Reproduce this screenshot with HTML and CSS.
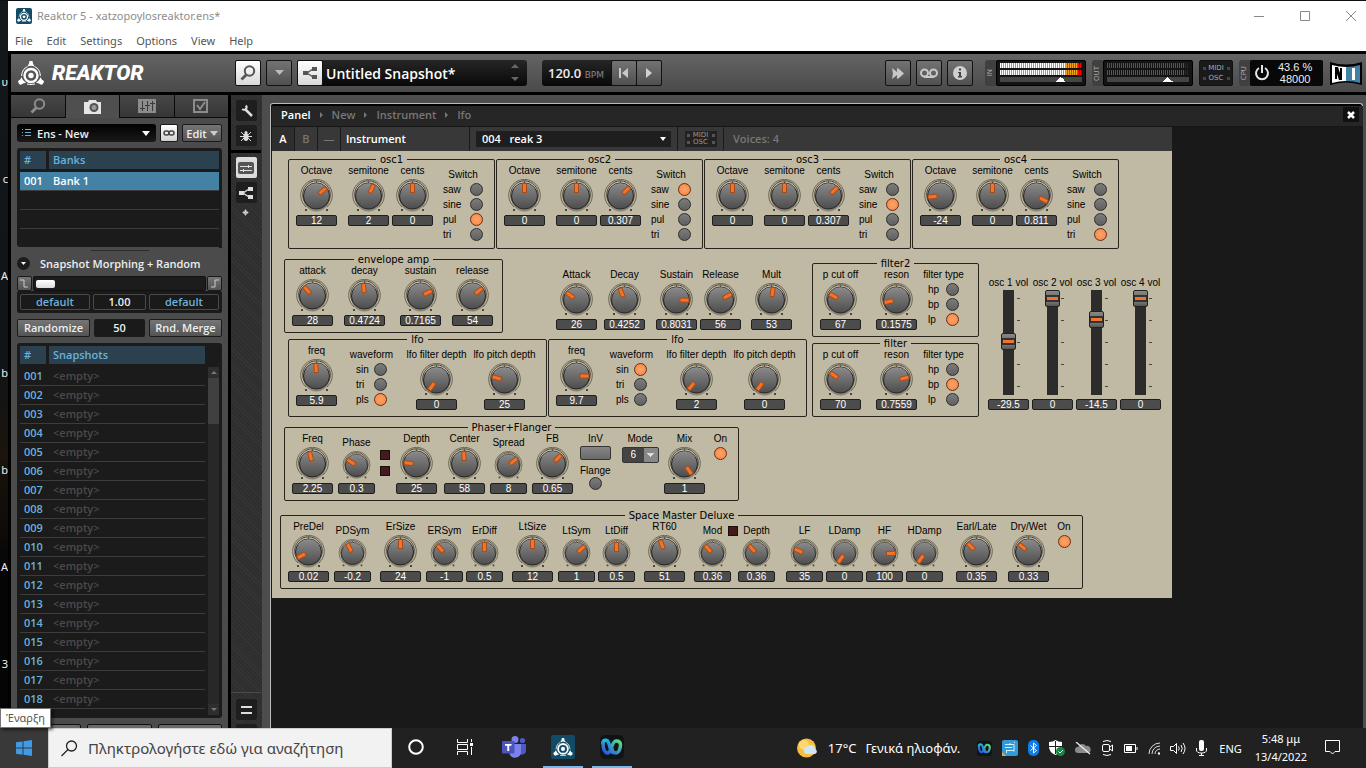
FILE: index.html
```html
<!DOCTYPE html>
<html lang="el">
<head>
  <meta charset="UTF-8">
  <title>Reaktor 5 - xatzopoylosreaktor.ens*</title>
  <link rel="stylesheet" href="styles.css">
</head>
<body>

  <svg class="symbols" aria-hidden="true">
    <defs>
      <linearGradient id="knobFill" x1="0" y1="0" x2="0" y2="1"><stop offset="0" stop-color="#8a8a8a"/><stop offset=".5" stop-color="#6c6c6c"/><stop offset="1" stop-color="#4c4c4c"/></linearGradient>
      <linearGradient id="webexA" x1="0" y1="0" x2="1" y2="1"><stop offset="0" stop-color="#16c7d8"/><stop offset="1" stop-color="#2866f0"/></linearGradient>
      <linearGradient id="webexB" x1="0" y1="1" x2="1" y2="0"><stop offset="0" stop-color="#2450f0"/><stop offset="1" stop-color="#5be07a"/></linearGradient>
    </defs>
    <symbol id="knob" viewBox="0 0 33 34">
      <g fill="none" stroke="#6b6656">
        <path d="M6 28A15.800 15.800 0 1 1 27 28"/>
        <path d="M8 26.500A13.800 13.800 0 1 1 25 26.500" stroke="#4a463c"/>
        <path d="M16.500 1v3"/>
      </g>
      <path d="M5 30h2v2H5zM26 30h2v2h-2z" fill="#4a463c"/>
      <ellipse cx="16.500" cy="20" rx="13" ry="12.500" fill="#3c382e" opacity=".4"/>
      <circle cx="16.500" cy="17" r="13" fill="url(#knobFill)" stroke="#262626"/>
      <path d="M6.500 10A12 12 0 0 1 26.500 10" fill="none" stroke="#a5a5a5" opacity=".6"/>
    </symbol>
    <symbol id="reaktor" viewBox="0 0 26 24">
      <circle cx="13" cy="14.500" r="6.500" fill="none" stroke="currentColor" stroke-width="2.400"/>
      <circle cx="13" cy="14.500" r="2.700" fill="currentColor"/>
      <path d="M11.500 0h3l.5 2.500 1.500 3q-3.500-1.500-7 0l1.500-3zM0 20l2-1.200 1.500-2.500q1 3.500 4.500 5.500l-3 .7-2 1.200q-2.500 0-3-3.700zM26 20l-2-1.200-1.500-2.500q-1 3.500-4.500 5.500l3 .7 2 1.200q2.500 0 3-3.700z" fill="currentColor"/>
      <path d="M9.500 5.500Q4 8 3.600 15M16.500 5.500Q22 8 22.400 15M9 23q4 1 8 0" fill="none" stroke="currentColor" stroke-width="1"/>
    </symbol>
    <symbol id="lens" viewBox="0 0 16 16">
      <circle cx="9.500" cy="6" r="4.700" fill="none" stroke="currentColor" stroke-width="2"/>
      <path d="M6.500 9.500L1.500 14.500" stroke="currentColor" stroke-width="2.800"/>
    </symbol>
    <symbol id="nodes" viewBox="0 0 14 12">
      <path d="M0 4h5v4H0zM9 0h5v4H9zM9 8h5v4H9z" fill="currentColor"/>
      <path d="M4 6L10 2M4 6l6 4" stroke="currentColor" stroke-width="1.500"/>
    </symbol>
    <symbol id="webex" viewBox="0 0 24 24">
      <rect width="24" height="24" rx="5" fill="#101417"/>
      <path d="M3 8c0-3 4-4 5.500-.5 1.500 3 1.500 8 4 10" fill="none" stroke="url(#webexA)" stroke-width="3.500" stroke-linecap="round"/>
      <path d="M3 8c0 4 1 9.500 4.500 10C11.500 18.500 11.500 6 16 6c3 0 4.500 1.500 4.500 4 0 4-2 8-4.500 8s-4-2-4-5" fill="none" stroke="url(#webexB)" stroke-width="3.500" stroke-linecap="round"/>
    </symbol>
  </svg>

  <div class="desktop">
    <div class="icon-names"><span>υ</span><span>c</span><span>A</span><span>b</span><span>b</span><span>A</span><span>3</span></div>

    <div class="window">
      <header class="titlebar">
        <div class="title-row">
          <span class="app-icon"><svg width="14" height="13"><use href="#reaktor"/></svg></span>
          <span class="title">Reaktor 5 - xatzopoylosreaktor.ens*</span>
          <button class="win-btn" aria-label="Minimize"><svg width="12" height="12"><path d="M1 6.500h10"/></svg></button>
          <button class="win-btn" aria-label="Maximize"><svg width="12" height="12"><path d="M1.500 1.500h9v9h-9z"/></svg></button>
          <button class="win-btn" aria-label="Close"><svg width="12" height="12"><path d="M1 1l10 10M11 1L1 11"/></svg></button>
        </div>
        <nav class="menu">
          <a href="#">File</a><a href="#">Edit</a><a href="#">Settings</a><a href="#">Options</a><a href="#">View</a><a href="#">Help</a>
        </nav>
      </header>

      <div class="app">
        <div class="toolbar">
          <svg class="logo" width="26" height="24"><use href="#reaktor"/></svg>
          <span class="wordmark">REAKTOR</span>
          <div class="tools">
            <button class="tool light" aria-label="Search"><svg width="16" height="16"><use href="#lens"/></svg></button>
            <button class="tool" aria-label="Snapshot menu"><svg width="9" height="6"><path d="M0 0h9L4.500 5z" fill="#bbb"/></svg></button>
            <div class="snapshot">
              <button class="tool light" aria-label="Structure"><svg width="14" height="12"><use href="#nodes"/></svg></button>
              <span class="snapshot-name">Untitled Snapshot*</span>
              <svg width="8" height="18"><path d="M0 4l4-4 4 4zM0 13h8l-4 4z" fill="#666"/></svg>
            </div>
            <div class="tempo">
              <span class="bpm">120.0 <small>BPM</small></span>
              <button class="tool" aria-label="Rewind"><svg width="10" height="10"><path d="M0 0h2v10H0zM9 0v10L3 5z" fill="#c8c8c8"/></svg></button>
              <button class="tool" aria-label="Play"><svg width="8" height="10"><path d="M1 0v10l6-5z" fill="#d0d0d0"/></svg></button>
            </div>
          </div>
          <div class="status">
            <div class="quick">
              <button class="tool" aria-label="Forward"><svg width="13" height="11"><path d="M0 0l5 4V0l2 1 5 4.500L7 10l-2 1V7l-5 4 1-5.500z" fill="#c8c8c8"/></svg></button>
              <button class="tool" aria-label="Recorder"><svg width="18" height="10"><path d="M4 9h10" stroke="#c8c8c8" stroke-width="2"/><circle cx="4.500" cy="5" r="3.500" fill="none" stroke="#c8c8c8" stroke-width="2"/><circle cx="13.500" cy="5" r="3.500" fill="none" stroke="#c8c8c8" stroke-width="2"/></svg></button>
              <button class="tool" aria-label="Info"><svg width="14" height="14"><circle cx="7" cy="7" r="7" fill="#d0d0d0"/><path d="M6 2.500h2v2H6zM5 6h3v4h1v1.500H5V10h1V7H5z" fill="#444"/></svg></button>
            </div>
            <div class="meter"><span class="side">IN</span><div class="bars hot"><i></i><i></i><b></b></div></div>
            <div class="meter"><span class="side">OUT</span><div class="bars"><i></i><i></i><b></b></div></div>
            <div class="midi"><span>MIDI</span><span>OSC</span></div>
            <div class="meter"><span class="side">CPU</span>
              <div class="load">
                <svg width="16" height="16"><path d="M5 3a6 6 0 1 0 6 0" fill="none" stroke="#e4e4e4" stroke-width="2"/><path d="M8 0v8" stroke="#e4e4e4" stroke-width="2"/></svg>
                <span>43.6 %<br>48000</span>
              </div>
            </div>
            <svg class="ni" width="34" height="25"><path d="M1 1q16 5 32 0v23q-16-5-32 0z" fill="#000"/><path d="M3 4q7 2 14 2v14q-7 0-14 2z" fill="#fff"/><path d="M17 6q7 0 14-2v18q-7-2-14-2z" fill="#4181a5"/><path d="M6 18V6h3l2 6V7h2v12h-3l-2-6v5z" fill="#000"/><path d="M23 7h3v12h-3z" fill="#fff"/></svg>
          </div>
        </div>

        <div class="work">
          <aside class="browser">
            <div class="tabs">
              <button aria-label="Browser"><svg width="16" height="16"><use href="#lens"/></svg></button>
              <button class="on" aria-label="Snapshots"><svg width="17" height="14"><path d="M0 2h4l1-2h7l1 2h4v12H0z" fill="#e6e6e6"/><circle cx="10" cy="7.500" r="4.500" fill="#555"/><circle cx="10" cy="7.500" r="2.500" fill="#999"/></svg></button>
              <button aria-label="Mixer"><svg width="18" height="14"><path d="M0 0h18v14H0z" fill="#8c8c8c"/><path d="M4.500 2v10M9.500 2v10M14.500 2v10M2 9.500h5M7 6.500h5M12 4.500h5" stroke="#3a3a3a"/></svg></button>
              <button aria-label="Settings"><svg width="16" height="14"><path d="M1 1h13v12H1z" fill="none" stroke="#8c8c8c" stroke-width="2"/><path d="M4 6l3 4 5-7" fill="none" stroke="#8c8c8c" stroke-width="2"/></svg></button>
            </div>

            <div class="ens-row">
              <div class="picker">
                <svg width="9" height="9"><path d="M0 .5h1M3 .5h6M0 3.500h1M3 3.500h6M0 6.500h1M3 6.500h6" stroke="#6ab2dc"/></svg>
                <select aria-label="Instrument"><option>Ens - New</option></select>
                <svg width="9" height="5"><path d="M0 0h8L4 5z" fill="#fff"/></svg>
              </div>
              <button class="btn link" aria-label="Link"><svg width="12" height="6"><rect x="1" y="1" width="5" height="4" rx="2" fill="none" stroke="#444" stroke-width="1.500"/><rect x="6" y="1" width="5" height="4" rx="2" fill="none" stroke="#444" stroke-width="1.500"/></svg></button>
              <button class="btn">Edit <svg width="8" height="5"><path d="M0 0h8L4 5z" fill="#ccc"/></svg></button>
            </div>

            <div class="list banks">
              <table>
                <thead><tr><th>#</th><th>Banks</th></tr></thead>
                <tbody>
                  <tr class="picked"><td>001</td><td>Bank 1</td></tr>
                  <tr><td></td><td></td></tr>
                  <tr><td></td><td></td></tr>
                  <tr><td></td><td></td></tr>
                </tbody>
              </table>
            </div>
            <div class="grip"></div>

            <h2 class="morph-title"><svg width="13" height="13"><circle cx="6.500" cy="6.500" r="6.500" fill="#1c1c1c"/><path d="M4 5h5L6.500 8z" fill="#fff"/></svg>Snapshot Morphing + Random</h2>
            <div class="morph">
              <button class="btn" aria-label="Morph start"><svg width="9" height="9"><path d="M0 1h4v7h4" fill="none" stroke="#ccc"/></svg></button>
              <input type="range" min="0" max="100" value="0" aria-label="Morph position">
              <button class="btn" aria-label="Morph end"><svg width="9" height="9"><path d="M1 8h4V1h4" fill="none" stroke="#ccc"/></svg></button>
            </div>
            <div class="morph-values"><button>default</button><output>1.00</output><button>default</button></div>
            <div class="random"><button class="btn">Randomize</button><output>50</output><button class="btn">Rnd. Merge</button></div>

            <div class="list snapshots">
              <table>
                <thead><tr><th>#</th><th>Snapshots</th></tr></thead>
                <tbody>
                  <tr><td>001</td><td>&lt;empty&gt;</td></tr>
                  <tr><td>002</td><td>&lt;empty&gt;</td></tr>
                  <tr><td>003</td><td>&lt;empty&gt;</td></tr>
                  <tr><td>004</td><td>&lt;empty&gt;</td></tr>
                  <tr><td>005</td><td>&lt;empty&gt;</td></tr>
                  <tr><td>006</td><td>&lt;empty&gt;</td></tr>
                  <tr><td>007</td><td>&lt;empty&gt;</td></tr>
                  <tr><td>008</td><td>&lt;empty&gt;</td></tr>
                  <tr><td>009</td><td>&lt;empty&gt;</td></tr>
                  <tr><td>010</td><td>&lt;empty&gt;</td></tr>
                  <tr><td>011</td><td>&lt;empty&gt;</td></tr>
                  <tr><td>012</td><td>&lt;empty&gt;</td></tr>
                  <tr><td>013</td><td>&lt;empty&gt;</td></tr>
                  <tr><td>014</td><td>&lt;empty&gt;</td></tr>
                  <tr><td>015</td><td>&lt;empty&gt;</td></tr>
                  <tr><td>016</td><td>&lt;empty&gt;</td></tr>
                  <tr><td>017</td><td>&lt;empty&gt;</td></tr>
                  <tr><td>018</td><td>&lt;empty&gt;</td></tr>
                </tbody>
              </table>
              <div class="scrollbar"><span class="up"></span><span class="thumb"></span><span class="down"></span></div>
            </div>
            <div class="footer"><span></span><span></span><span></span></div>
          </aside>

          <div class="strip">
            <button aria-label="Edit mode"><svg width="13" height="13"><path d="M2 3.500a2.500 2.500 0 0 0 5 0" transform="rotate(-45 4 4)" fill="none" stroke="#ddd" stroke-width="2"/><path d="M5 5l7 7" stroke="#ddd" stroke-width="2.500"/></svg></button>
            <button aria-label="Debug"><svg width="12" height="12"><ellipse cx="6" cy="7" rx="2.500" ry="4" fill="#ddd"/><circle cx="6" cy="2.500" r="1.500" fill="#ddd"/><path d="M1 2l3 3M11 2L8 5M0 6.500h12M1 11l3-3M11 11L8 8" stroke="#ddd"/></svg></button>
            <hr>
            <button class="on" aria-label="Panel"><svg width="16" height="12"><rect width="16" height="12" rx="2" fill="#555"/><path d="M2 4.500h12M2 8.500h12M10.500 3v3M5.500 7v3" stroke="#e0e0e0"/></svg></button>
            <button aria-label="Structure"><svg width="14" height="12"><use href="#nodes"/></svg></button>
            <svg class="plus" width="8" height="8"><path d="M3 1h1v2h2v1H4v2H3V4H1V3h2z" stroke="#ccc" fill="#ccc"/></svg>
            <div class="strip-end">
              <button aria-label="Split"><svg width="11" height="8"><path d="M0 1h11M0 7h11" stroke="#ddd" stroke-width="2"/></svg></button>
              <button aria-label="More"></button>
            </div>
          </div>

          <main class="view">
            <div class="crumbs">
              <strong>Panel</strong><i></i><a href="#">New</a><i></i><a href="#">Instrument</a><i></i><a href="#">lfo</a>
              <button aria-label="Close panel"><svg width="8" height="8"><path d="M1 1l6 6M7 1L1 7" stroke="#fff" stroke-width="2.500"/></svg></button>
            </div>
            <div class="instrument-bar">
              <span class="cell a">A</span><span class="cell b">B</span><span class="cell">—</span>
              <span class="cell name">Instrument</span>
              <div class="cell pick">
                <select aria-label="Snapshot"><option>004 &nbsp; reak 3</option></select>
                <svg width="7" height="4"><path d="M0 0h6L3 4z" fill="#fff"/></svg>
              </div>
              <div class="cell midi"><span>MIDI</span><span>OSC</span></div>
              <span class="voices">Voices: 4</span>
            </div>

            <div class="panel">
              <div class="row oscs">
                <fieldset class="osc">
                  <legend>osc1</legend>
                  <label class="dial"><span>Octave</span><svg><use href="#knob"/></svg><input type="range" style="--turn:50deg"><output>12</output></label>
                  <label class="dial"><span>semitone</span><svg><use href="#knob"/></svg><input type="range" style="--turn:24deg"><output>2</output></label>
                  <label class="dial"><span>cents</span><svg><use href="#knob"/></svg><input type="range" style="--turn:0deg"><output>0</output></label>
                  <div class="switch"><span>Switch</span>
                    <label>saw<input type="radio" name="osc1"></label><label>sine<input type="radio" name="osc1"></label><label>pul<input type="radio" name="osc1" checked></label><label>tri<input type="radio" name="osc1"></label>
                  </div>
                </fieldset>
                <fieldset class="osc">
                  <legend>osc2</legend>
                  <label class="dial"><span>Octave</span><svg><use href="#knob"/></svg><input type="range" style="--turn:0deg"><output>0</output></label>
                  <label class="dial"><span>semitone</span><svg><use href="#knob"/></svg><input type="range" style="--turn:0deg"><output>0</output></label>
                  <label class="dial"><span>cents</span><svg><use href="#knob"/></svg><input type="range" style="--turn:46deg"><output>0.307</output></label>
                  <div class="switch"><span>Switch</span>
                    <label>saw<input type="radio" name="osc2" checked></label><label>sine<input type="radio" name="osc2"></label><label>pul<input type="radio" name="osc2"></label><label>tri<input type="radio" name="osc2"></label>
                  </div>
                </fieldset>
                <fieldset class="osc">
                  <legend>osc3</legend>
                  <label class="dial"><span>Octave</span><svg><use href="#knob"/></svg><input type="range" style="--turn:0deg"><output>0</output></label>
                  <label class="dial"><span>semitone</span><svg><use href="#knob"/></svg><input type="range" style="--turn:0deg"><output>0</output></label>
                  <label class="dial"><span>cents</span><svg><use href="#knob"/></svg><input type="range" style="--turn:46deg"><output>0.307</output></label>
                  <div class="switch"><span>Switch</span>
                    <label>saw<input type="radio" name="osc3"></label><label>sine<input type="radio" name="osc3" checked></label><label>pul<input type="radio" name="osc3"></label><label>tri<input type="radio" name="osc3"></label>
                  </div>
                </fieldset>
                <fieldset class="osc">
                  <legend>osc4</legend>
                  <label class="dial"><span>Octave</span><svg><use href="#knob"/></svg><input type="range" style="--turn:-95deg"><output>-24</output></label>
                  <label class="dial"><span>semitone</span><svg><use href="#knob"/></svg><input type="range" style="--turn:0deg"><output>0</output></label>
                  <label class="dial"><span>cents</span><svg><use href="#knob"/></svg><input type="range" style="--turn:118deg"><output>0.811</output></label>
                  <div class="switch"><span>Switch</span>
                    <label>saw<input type="radio" name="osc4"></label><label>sine<input type="radio" name="osc4"></label><label>pul<input type="radio" name="osc4"></label><label>tri<input type="radio" name="osc4" checked></label>
                  </div>
                </fieldset>
              </div>

              <div class="row middle">
                <div class="modulators">
                  <div class="row envelopes">
                    <fieldset class="env">
                      <legend>envelope amp</legend>
                      <label class="dial"><span>attack</span><svg><use href="#knob"/></svg><input type="range" style="--turn:-42deg"><output>28</output></label>
                      <label class="dial"><span>decay</span><svg><use href="#knob"/></svg><input type="range" style="--turn:-5deg"><output>0.4724</output></label>
                      <label class="dial"><span>sustain</span><svg><use href="#knob"/></svg><input type="range" style="--turn:65deg"><output>0.7165</output></label>
                      <label class="dial"><span>release</span><svg><use href="#knob"/></svg><input type="range" style="--turn:51deg"><output>54</output></label>
                    </fieldset>
                    <div class="env2">
                      <label class="dial"><span>Attack</span><svg><use href="#knob"/></svg><input type="range" style="--turn:-53deg"><output>26</output></label>
                      <label class="dial"><span>Decay</span><svg><use href="#knob"/></svg><input type="range" style="--turn:-22deg"><output>0.4252</output></label>
                      <label class="dial"><span>Sustain</span><svg><use href="#knob"/></svg><input type="range" style="--turn:91deg"><output>0.8031</output></label>
                      <label class="dial"><span>Release</span><svg><use href="#knob"/></svg><input type="range" style="--turn:61deg"><output>56</output></label>
                      <label class="dial"><span>Mult</span><svg><use href="#knob"/></svg><input type="range" style="--turn:8deg"><output>53</output></label>
                    </div>
                  </div>
                  <div class="row lfos">
                    <fieldset class="lfo">
                      <legend>lfo</legend>
                      <label class="dial"><span>freq</span><svg><use href="#knob"/></svg><input type="range" style="--turn:-3deg"><output>5.9</output></label>
                      <div class="switch"><span>waveform</span>
                        <label>sin<input type="radio" name="lfo1"></label><label>tri<input type="radio" name="lfo1"></label><label>pls<input type="radio" name="lfo1" checked></label>
                      </div>
                      <label class="dial low"><span>lfo filter depth</span><svg><use href="#knob"/></svg><input type="range" style="--turn:-144deg"><output>0</output></label>
                      <label class="dial low"><span>lfo pitch depth</span><svg><use href="#knob"/></svg><input type="range" style="--turn:-75deg"><output>25</output></label>
                    </fieldset>
                    <fieldset class="lfo">
                      <legend>lfo</legend>
                      <label class="dial"><span>freq</span><svg><use href="#knob"/></svg><input type="range" style="--turn:90deg"><output>9.7</output></label>
                      <div class="switch"><span>waveform</span>
                        <label>sin<input type="radio" name="lfo2" checked></label><label>tri<input type="radio" name="lfo2"></label><label>pls<input type="radio" name="lfo2"></label>
                      </div>
                      <label class="dial low"><span>lfo filter depth</span><svg><use href="#knob"/></svg><input type="range" style="--turn:-140deg"><output>2</output></label>
                      <label class="dial low"><span>lfo pitch depth</span><svg><use href="#knob"/></svg><input type="range" style="--turn:-144deg"><output>0</output></label>
                    </fieldset>
                  </div>
                </div>

                <div class="filters">
                  <fieldset class="filter">
                    <legend>filter2</legend>
                    <label class="dial"><span>p cut off</span><svg><use href="#knob"/></svg><input type="range" style="--turn:-61deg"><output>67</output></label>
                    <label class="dial"><span>reson</span><svg><use href="#knob"/></svg><input type="range" style="--turn:-102deg"><output>0.1575</output></label>
                    <div class="switch"><span>filter type</span>
                      <label>hp<input type="radio" name="filter2"></label><label>bp<input type="radio" name="filter2"></label><label>lp<input type="radio" name="filter2" checked></label>
                    </div>
                  </fieldset>
                  <fieldset class="filter">
                    <legend>filter</legend>
                    <label class="dial"><span>p cut off</span><svg><use href="#knob"/></svg><input type="range" style="--turn:-54deg"><output>70</output></label>
                    <label class="dial"><span>reson</span><svg><use href="#knob"/></svg><input type="range" style="--turn:77deg"><output>0.7559</output></label>
                    <div class="switch"><span>filter type</span>
                      <label>hp<input type="radio" name="filter"></label><label>bp<input type="radio" name="filter" checked></label><label>lp<input type="radio" name="filter"></label>
                    </div>
                  </fieldset>
                </div>

                <div class="faders">
                  <label class="fader"><span>osc 1 vol</span><input type="range" min="-60" max="0" step="0.5" value="-29.5"><output>-29.5</output></label>
                  <label class="fader"><span>osc 2 vol</span><input type="range" min="-60" max="0" step="0.5" value="0"><output>0</output></label>
                  <label class="fader"><span>osc 3 vol</span><input type="range" min="-60" max="0" step="0.5" value="-14.5"><output>-14.5</output></label>
                  <label class="fader"><span>osc 4 vol</span><input type="range" min="-60" max="0" step="0.5" value="0"><output>0</output></label>
                </div>
              </div>

              <fieldset class="phaser">
                <legend>Phaser+Flanger</legend>
                <label class="dial"><span>Freq</span><svg><use href="#knob"/></svg><input type="range" style="--turn:-14deg"><output>2.25</output></label>
                <label class="dial small"><span>Phase</span><svg><use href="#knob"/></svg><input type="range" style="--turn:-57deg"><output>0.3</output></label>
                <div class="leds"><i class="led"></i><i class="led"></i></div>
                <label class="dial"><span>Depth</span><svg><use href="#knob"/></svg><input type="range" style="--turn:-84deg"><output>25</output></label>
                <label class="dial"><span>Center</span><svg><use href="#knob"/></svg><input type="range" style="--turn:-4deg"><output>58</output></label>
                <label class="dial small"><span>Spread</span><svg><use href="#knob"/></svg><input type="range" style="--turn:50deg"><output>8</output></label>
                <label class="dial"><span>FB</span><svg><use href="#knob"/></svg><input type="range" style="--turn:43deg"><output>0.65</output></label>
                <div class="stack">
                  <span id="inv">InV</span><button class="inv" aria-labelledby="inv"></button>
                  <label>Flange<input type="checkbox"></label>
                </div>
                <label class="stack">Mode<select><option>6</option></select></label>
                <label class="dial"><span>Mix</span><svg><use href="#knob"/></svg><input type="range" style="--turn:145deg"><output>1</output></label>
                <label class="stack">On<input type="checkbox" checked></label>
              </fieldset>

              <fieldset class="reverb">
                <legend>Space Master Deluxe</legend>
                <label class="dial"><span>PreDel</span><svg><use href="#knob"/></svg><input type="range" style="--turn:-118deg"><output>0.02</output></label>
                <label class="dial small"><span>PDSym</span><svg><use href="#knob"/></svg><input type="range" style="--turn:-28deg"><output>-0.2</output></label>
                <label class="dial"><span>ErSize</span><svg><use href="#knob"/></svg><input type="range" style="--turn:0deg"><output>24</output></label>
                <label class="dial small"><span>ERSym</span><svg><use href="#knob"/></svg><input type="range" style="--turn:-40deg"><output>-1</output></label>
                <label class="dial small"><span>ErDiff</span><svg><use href="#knob"/></svg><input type="range" style="--turn:0deg"><output>0.5</output></label>
                <label class="dial"><span>LtSize</span><svg><use href="#knob"/></svg><input type="range" style="--turn:0deg"><output>12</output></label>
                <label class="dial small"><span>LtSym</span><svg><use href="#knob"/></svg><input type="range" style="--turn:48deg"><output>1</output></label>
                <label class="dial small"><span>LtDiff</span><svg><use href="#knob"/></svg><input type="range" style="--turn:0deg"><output>0.5</output></label>
                <label class="dial"><span>RT60</span><svg><use href="#knob"/></svg><input type="range" style="--turn:-20deg"><output>51</output></label>
                <label class="dial small"><span>Mod</span><svg><use href="#knob"/></svg><input type="range" style="--turn:-42deg"><output>0.36</output></label>
                <div class="leds"><i class="led"></i></div>
                <label class="dial small"><span>Depth</span><svg><use href="#knob"/></svg><input type="range" style="--turn:-42deg"><output>0.36</output></label>
                <label class="dial small"><span>LF</span><svg><use href="#knob"/></svg><input type="range" style="--turn:-66deg"><output>35</output></label>
                <label class="dial small"><span>LDamp</span><svg><use href="#knob"/></svg><input type="range" style="--turn:-145deg"><output>0</output></label>
                <label class="dial small"><span>HF</span><svg><use href="#knob"/></svg><input type="range" style="--turn:88deg"><output>100</output></label>
                <label class="dial small"><span>HDamp</span><svg><use href="#knob"/></svg><input type="range" style="--turn:-145deg"><output>0</output></label>
                <label class="dial"><span>Earl/Late</span><svg><use href="#knob"/></svg><input type="range" style="--turn:-45deg"><output>0.35</output></label>
                <label class="dial"><span>Dry/Wet</span><svg><use href="#knob"/></svg><input type="range" style="--turn:-50deg"><output>0.33</output></label>
                <label class="stack">On<input type="checkbox" checked></label>
              </fieldset>
            </div>
          </main>
        </div>
      </div>
    </div>
  </div>

  <footer class="taskbar">
    <button class="start" aria-label="Έναρξη"><svg width="16" height="16"><path d="M0 2.300L6.500 1.400v6.200H0zM7.500 1.200L16 0v7.600H7.500zM0 8.500h6.500v6.200L0 13.800zM7.500 8.500H16V16l-8.500-1.200z" fill="#3f9be6"/></svg></button>
    <label class="search">
      <svg width="17" height="17"><circle cx="10.500" cy="6" r="5" fill="none" stroke="#222" stroke-width="1.300"/><path d="M7 9.500L0.500 16" stroke="#222" stroke-width="1.300"/></svg>
      <input type="text" placeholder="Πληκτρολογήστε εδώ για αναζήτηση" aria-label="Αναζήτηση">
    </label>
    <div class="apps">
      <button aria-label="Cortana"><svg width="16" height="16"><circle cx="8" cy="8" r="6.800" fill="none" stroke="#fff" stroke-width="2"/></svg></button>
      <button aria-label="Task view"><svg width="18" height="16" fill="none" stroke="#fff"><path d="M1.500 0v3.500h10V0M1.500 5.500h10v5h-10zM1.500 16v-3.500h10V16M15.500 0v3M15.500 8v8"/><path d="M14 4h3v3h-3z" fill="#fff" stroke="none"/></svg></button>
      <button aria-label="Teams"><svg width="24" height="24"><circle cx="13" cy="4.500" r="3.500" fill="#7b83eb"/><circle cx="20.500" cy="5.500" r="2.600" fill="#5059c9"/><path d="M16 9h8v6.500a4.500 4.500 0 0 1-6 4z" fill="#5059c9"/><path d="M8 9h11v8a6 6 0 0 1-11.500 2z" fill="#7b83eb"/><rect y="6" width="12.500" height="12.500" rx="1" fill="#4b53bc"/><path d="M3 9h6.500v1.800H7.200V16H5.300v-5.200H3z" fill="#fff"/></svg></button>
      <button class="open" aria-label="Reaktor"><span class="app-icon big"><svg width="20" height="18"><use href="#reaktor"/></svg></span></button>
      <button class="open" aria-label="Webex"><svg width="24" height="24"><use href="#webex"/></svg></button>
    </div>
    <div class="tray">
      <svg width="21" height="20"><circle cx="9.500" cy="10" r="9.500" fill="#f8bd3a"/><circle cx="7" cy="7" r="5" fill="#fcd772"/><path d="M10 16a3.500 3.500 0 0 1 .5-7 4 4 0 0 1 7.500 2 2.600 2.600 0 0 1 0 5z" fill="#cfe6f7"/></svg>
      <span class="weather"><span>17°C</span><span>Γενικά ηλιοφάν.</span></span>
      <svg width="15" height="15"><use href="#webex"/></svg>
      <svg width="16" height="16"><rect width="16" height="16" rx="2" fill="#2f9bd8"/><path d="M3 4.500h9v7M3 7.500h7M5 10.500h7M4.500 13v-3M12 2l1 1M8 3v2" stroke="#d5effc" fill="none"/><path d="M0 12l4 4H0z" fill="#e3a944"/></svg>
      <svg width="11" height="16"><rect width="11" height="16" rx="5" fill="#0b7ce8"/><path d="M2.500 5.500l6 5L5.500 13V3l3 2.500-6 5" fill="none" stroke="#fff"/></svg>
      <svg width="16" height="16"><path d="M0 2q4 0 6.500-2Q9 2 13 2v5q0 5-6.500 8Q0 12 0 7z" fill="#fff"/><path d="M6.500 1v13M0 6.500h13" stroke="#222"/><circle cx="11.500" cy="11.500" r="4.500" fill="#128a3d"/><path d="M9.500 11.500l1.500 1.500 3-3" stroke="#fff" fill="none"/></svg>
      <svg width="16" height="13"><path d="M3 11a3 3 0 0 1 0-6 4.500 4.500 0 0 1 8-1 3.500 3.500 0 0 1 2 7z" fill="#8b8b8b"/><path d="M1 0l14 12" stroke="#eee" stroke-width="1.300"/></svg>
      <svg width="13" height="16" fill="none" stroke="#fff"><rect x="1.500" y="4.500" width="7" height="7" rx="1.500"/><path d="M9 7l2.500-2v6L9 9M2 1.500q4-2 8 0M2 14.500q4 2 8 0"/></svg>
      <svg width="14" height="9"><path d="M.5.500h11v8H.5zM13 3v3" fill="none" stroke="#fff"/><path d="M2 2h6v5H2z" fill="#fff"/></svg>
      <svg width="12" height="13" fill="none" stroke="#ddd"><path d="M1 12A11 11 0 0 1 12 1M4 12a8 8 0 0 1 8-8M7 12a5 5 0 0 1 5-5"/><circle cx="11" cy="11.500" r="1.200" fill="#fff" stroke="none"/></svg>
      <svg width="16" height="13" fill="none" stroke="#fff"><path d="M.5 4.500h3l3-3v10l-3-3h-3zM8.500 4.500q1.500 2 0 4M11 3q2.500 3.500 0 7M13 1q4 5.500 0 11"/></svg>
      <svg width="11" height="16"><rect x="3" width="5" height="11" rx="2" fill="#fff"/><path d="M.5 8v2q0 3 5 3t5-3V8M5.500 13v3M3 15.500h5" fill="none" stroke="#fff"/></svg>
      <span class="lang">ENG</span>
      <span class="clock">5:48 μμ<br>13/4/2022</span>
      <svg width="16" height="16"><path d="M.5.500h14v11H10L7.500 14 5 11.500H.5z" fill="none" stroke="#fff"/></svg>
    </div>
    <div class="tooltip">Έναρξη</div>
  </footer>

</body>
</html>
```
FILE: styles.css
```css
* {
  box-sizing: border-box;
}
body {
  margin: 0;
  height: 100vh;
  display: flex;
  flex-direction: column;
  overflow: hidden;
  background: #0d0f12;
  font-family: "Noto Sans", "Open Sans", sans-serif;
  font-size: 11px;
  color: #eee;
}
button, input, select, output {
  font: inherit;
  color: inherit;
  margin: 0;
  padding: 0;
}
button {
  border: none;
  background: none;
  display: flex;
  align-items: center;
  justify-content: center;
}
select {
  appearance: none;
  border: none;
  background: none;
}
a {
  color: inherit;
  text-decoration: none;
}
svg {
  display: block;
  flex: none;
}
.symbols {
  position: absolute;
  width: 0;
  height: 0;
}

/* desktop and window frame */
.desktop {
  flex: 1;
  min-height: 0;
  display: flex;
  padding-top: 1px;
}
.icon-names {
  width: 8px;
  padding-top: 32px;
  overflow: hidden;
  background: linear-gradient(#14171b, #101418 50%, #1c140d 62%, #050505 80%);
}
.icon-names span {
  display: flex;
  align-items: center;
  justify-content: flex-end;
  height: 97px;
}
.window {
  flex: 1;
  min-width: 0;
  display: flex;
  flex-direction: column;
}
.titlebar {
  height: 50px;
  background: #fff;
  color: #555;
}
.title-row {
  display: flex;
  align-items: center;
  gap: 16px;
  height: 29px;
  padding-left: 8px;
}
.title {
  flex: 1;
  margin-left: -11px;
  color: #8d8d8d;
}
.app-icon {
  display: flex;
  align-items: center;
  justify-content: center;
  width: 16px;
  height: 16px;
  border-radius: 2px;
  background: #124b66;
  color: #fff;
}
.app-icon.big {
  width: 24px;
  height: 24px;
}
.win-btn {
  width: 30px;
}
.win-btn svg {
  fill: none;
  stroke: #888;
}
.menu {
  display: flex;
  gap: 14px;
  padding-left: 7px;
  line-height: 22px;
}
.app {
  flex: 1;
  min-height: 0;
  display: flex;
  flex-direction: column;
  padding: 3px 0 0 3px;
  background: #000;
  font-family: "Open Sans", "Noto Sans", sans-serif;
  font-weight: 600;
}

/* top toolbar */
.toolbar {
  display: flex;
  align-items: center;
  height: 38px;
  margin-bottom: 3px;
  padding: 0 3px 0 7px;
  background: linear-gradient(#646464, #4a4a4a);
}
.logo {
  color: #fff;
}
.wordmark {
  width: 191px;
  padding-left: 8px;
  font: italic 900 21px/30px Roboto, "Liberation Sans", sans-serif;
  color: #fff;
}
.tools, .status, .quick, .snapshot, .tempo, .meter {
  display: flex;
  align-items: center;
}
.tools {
  flex: 1;
  gap: 5px;
}
.status {
  gap: 6px;
}
.quick {
  gap: 5px;
  margin-right: 6px;
}
.tool {
  width: 26px;
  height: 26px;
  border: 1px solid #111;
  border-radius: 2px;
  background: linear-gradient(#737373, #505050);
}
.tool.light {
  background: linear-gradient(#fff, #d8d8d8);
  color: #555;
}
.snapshot {
  width: 230px;
  padding-right: 8px;
  border-radius: 3px;
  background: linear-gradient(#262626, #080808);
}
.snapshot-name {
  flex: 1;
  padding-left: 3px;
  font-size: 14px;
  color: #fff;
}
.tempo {
  margin-left: 10px;
  height: 26px;
  border-radius: 3px;
  background: linear-gradient(#262626, #080808);
}
.bpm {
  width: 69px;
  padding-left: 6px;
  font-size: 13px;
  white-space: nowrap;
}
.bpm small {
  font: 9px "DejaVu Sans", sans-serif;
  color: #888;
}
.tempo .tool + .tool {
  margin-left: -1px;
}
.meter {
  height: 26px;
  border-radius: 3px;
  background: #404040;
}
.side {
  width: 11px;
  writing-mode: vertical-rl;
  transform: rotate(180deg);
  text-align: center;
  font: 7px/11px "DejaVu Sans", sans-serif;
  color: #aaa;
}
.bars {
  width: 90px;
  height: 26px;
  padding: 2px 3px;
  border: 1px solid #000;
  border-radius: 2px;
  background: #141414;
}
.bars i {
  display: block;
  height: 5px;
  margin-bottom: 2px;
  background: repeating-linear-gradient(90deg, transparent 0 1px, #141414 1px 2px), linear-gradient(90deg, #555 94%, #6b0a14 94%);
}
.bars.hot i {
  background: repeating-linear-gradient(90deg, transparent 0 1px, #0006 1px 2px), linear-gradient(90deg, #fff 80%, #f5a01c 80% 95%, #f00 95%);
}
.bars b {
  display: block;
  height: 5px;
  background: linear-gradient(to bottom right, transparent 50%, #fff 50%) 56px 0 / 5px 5px no-repeat, linear-gradient(to bottom left, transparent 50%, #fff 50%) 61px 0 / 5px 5px no-repeat, #454545;
}
.midi {
  display: flex;
  flex-direction: column;
  align-items: center;
  justify-content: center;
  width: 34px;
  height: 26px;
  border: 1px solid #111;
  border-radius: 2px;
  background: #1a1a1a;
  font: 7px/10px "DejaVu Sans", sans-serif;
  color: #aaa;
}
.status .midi span {
  width: 27px;
  text-align: center;
  background: linear-gradient(#444, #444) 0 4px / 3px 3px no-repeat, linear-gradient(#444, #444) 24px 4px / 3px 3px no-repeat;
}
.load {
  display: flex;
  align-items: center;
  gap: 8px;
  width: 73px;
  height: 26px;
  padding-left: 4px;
  border-radius: 2px;
  background: #080808;
  font: 11px/12px "Liberation Sans", sans-serif;
  text-align: center;
}

/* browser column */
.work {
  flex: 1;
  min-height: 0;
  display: flex;
}
.browser {
  width: 217px;
  padding: 0 6px;
  background: #4b4b4b;
}
.tabs {
  display: flex;
  gap: 1px;
  margin: 0 -6px;
  background: #0a0a0a;
}
.tabs button {
  flex: 1;
  height: 23px;
  border-bottom: 1px solid #0a0a0a;
  background: linear-gradient(#474747, #363636);
  color: #8c8c8c;
}
.tabs .on {
  border-bottom: none;
  background: #4f4f4f;
}
.ens-row {
  display: grid;
  grid-template-columns: 139px 18px 40px;
  gap: 4px;
  margin: 6px 0;
}
.picker {
  display: flex;
  align-items: center;
  gap: 6px;
  height: 18px;
  padding: 0 5px;
  border-radius: 3px;
  background: linear-gradient(#000, #1a1a1a);
}
.picker select {
  flex: 1;
}
.btn {
  height: 18px;
  gap: 3px;
  border: 1px solid #1a1a1a;
  border-radius: 2px;
  background: linear-gradient(#757575, #545454);
  white-space: nowrap;
}
.btn.link {
  background: linear-gradient(#fff, #d0d0d0);
}
.list {
  display: flex;
  gap: 3px;
  padding: 3px 0 3px 3px;
  border-radius: 3px;
  background: #1b1b1b;
}
.banks {
  height: 99px;
}
.snapshots {
  height: 375px;
}
.list table {
  flex: 1;
  border-collapse: separate;
  border-spacing: 0;
  table-layout: fixed;
  height: min-content;
  color: #6ab2dc;
}
.list th, .list td {
  height: 19px;
  padding: 0 4px;
  line-height: 18px;
  text-align: left;
}
.list th {
  height: 21px;
  background: linear-gradient(#2b414f, #2b414f) 0 0 / 100% 18px no-repeat;
  font-weight: 600;
  vertical-align: top;
}
.list th:first-child {
  width: 29px;
  border-right: 3px solid #1b1b1b;
}
.list td {
  border-bottom: 1px solid #3c3c3c;
}
.list td + td {
  color: #4a4a4a;
}
.list .picked td {
  background: #4482a5;
  color: #fff;
}
.banks tr:last-child td {
  border-bottom: none;
}
.banks table {
  border-right: 3px solid #1b1b1b;
}
.snapshots .scrollbar {
  display: flex;
  flex-direction: column;
  width: 11px;
  margin: 21px 3px 0 0;
  background: #282828;
}
.up, .down {
  height: 11px;
  background: #2e2e2e;
}
.up::before, .down::before {
  content: "";
  display: block;
  margin: 4px auto 0;
  width: 0;
  border: 3px solid transparent;
  border-top: 0;
  border-bottom-color: #777;
}
.down::before {
  border: 3px solid transparent;
  border-bottom: 0;
  border-top-color: #777;
}
.thumb {
  height: 46px;
  margin-bottom: auto;
  background: #404040;
}
.grip {
  width: 58px;
  height: 1px;
  margin: 3px auto 0;
  background: #2c2c2c;
}
.morph-title {
  display: flex;
  align-items: center;
  gap: 10px;
  height: 25px;
  margin: 0;
  font-size: 11px;
  font-weight: 600;
}
.morph {
  display: grid;
  grid-template-columns: 15px 1fr 15px;
  gap: 1px;
}
.morph .btn {
  height: 15px;
}
.morph input {
  appearance: none;
  width: 100%;
  height: 15px;
  padding: 0 2px;
  border: 1px solid #111;
  border-radius: 2px;
  background: #1c1c1c;
}
.morph input::-webkit-slider-thumb {
  appearance: none;
  width: 19px;
  height: 8px;
  border-radius: 2px;
  background: linear-gradient(#fff, #ddd);
}
.morph-values, .random {
  display: grid;
  grid-template-columns: 70px 53px 70px;
  gap: 3px;
  text-align: center;
}
.morph-values {
  padding: 3px;
  border-radius: 2px;
  background: #1a1a1a;
}
.morph-values > * {
  height: 16px;
  border: 1px solid #4a4a4a;
  border-radius: 2px;
  line-height: 14px;
}
.morph-values button {
  color: #6ab2dc;
}
.random {
  grid-template-columns: 73px 51px 73px;
  gap: 4px;
  margin: 6px 0;
  line-height: 18px;
}
.random output {
  border-radius: 2px;
  background: #1a1a1a;
}
.footer {
  display: flex;
  gap: 6px;
  padding-top: 6px;
}
.footer span {
  flex: 1;
  height: 18px;
  border: 1px solid #111;
  border-radius: 2px;
  background: #6a6a6a;
}

/* mode strip */
.strip {
  display: flex;
  flex-direction: column;
  align-items: center;
  gap: 4px;
  width: 31px;
  margin-left: 3px;
  padding: 5px 1px 0 0;
  background: repeating-linear-gradient(45deg, #353535 0 1px, #2e2e2e 1px 3px);
  color: #ddd;
}
.strip button {
  width: 21px;
  height: 21px;
  border-radius: 2px;
  background: #1e1e1e;
}
.strip .on {
  background: #dcdcdc;
}
.strip hr {
  width: 30px;
  height: 3px;
  margin: 0;
  border: none;
  background: #000;
}
.plus {
  margin-top: 2px;
}
.strip-end {
  display: flex;
  flex-direction: column;
  align-items: center;
  gap: 4px;
  width: 30px;
  height: 36px;
  margin-top: auto;
  padding-top: 6px;
  border-top: 1px solid #4a4a4a;
  overflow: hidden;
}
.strip-end button {
  flex: none;
}

/* instrument view */
.view {
  flex: 1;
  min-width: 0;
  padding: 8px 3px 0 8px;
  background: linear-gradient(#bbb, #bbb) 8px 10px / 1px 100% no-repeat, linear-gradient(#191919, #191919) 9px 10px / calc(100% - 12px) 100% no-repeat, #4d4d4d;
}
.view::before {
  content: "";
  display: block;
  height: 2px;
  border: 1px solid #bbb;
  border-bottom: none;
  border-radius: 3px 3px 0 0;
  background: #000;
}
.crumbs, .instrument-bar, .panel {
  margin-left: 2px;
}
.crumbs {
  display: flex;
  align-items: center;
  gap: 9px;
  height: 21px;
  padding: 0 4px 3px 9px;
  background: #262626;
  border-bottom: 1px solid #151515;
  color: #777;
}
.crumbs strong {
  font-weight: 600;
  color: #fff;
}
.crumbs i {
  border: 3px solid transparent;
  border-left-color: #777;
  border-right: none;
}
.crumbs button {
  width: 16px;
  height: 15px;
  margin-left: auto;
  background: #111;
}
.instrument-bar {
  display: flex;
  width: 900px;
  height: 24px;
  background: #383838;
  line-height: 24px;
}
.cell {
  width: 23px;
  border-right: 1px solid #1a1a1a;
  text-align: center;
  color: #777;
}
.cell.a {
  background: #2e2e2e;
  color: #fff;
}
.cell.name {
  width: 129px;
  padding-left: 5px;
  text-align: left;
  color: #fff;
}
.cell.pick {
  display: flex;
  align-items: center;
  width: 208px;
  padding: 0 6px;
  background: linear-gradient(#1e1e1e, #1e1e1e) 6px 4px / 195px 16px no-repeat;
  color: #fff;
}
.cell.pick select {
  flex: 1;
  padding-left: 6px;
}
.cell.pick svg {
  margin-right: 4px;
}
.cell.midi {
  width: 46px;
  height: 24px;
  border: none;
  border-right: 1px solid #1a1a1a;
  background: linear-gradient(#222, #222) 7px 4px / 32px 16px no-repeat;
  font: 7px/7px "DejaVu Sans", sans-serif;
  color: #999;
}
.cell.midi span {
  width: 28px;
  background: linear-gradient(#555, #555) 0 2px / 3px 3px no-repeat, linear-gradient(#555, #555) 25px 2px / 3px 3px no-repeat;
}
.voices {
  padding-left: 9px;
  color: #777;
}

/* instrument panel */
.panel {
  width: 900px;
  padding: 3px 8px 9px;
  background: #c0b9a3;
  color: #000;
  font: 10px/12px "Liberation Sans", Arial, sans-serif;
}
.row {
  display: flex;
}
.oscs {
  gap: 1px;
  padding-left: 8px;
  margin-bottom: 5px;
}
fieldset {
  display: grid;
  justify-items: center;
  margin: 0;
  padding: 0 0 6px;
  min-width: 0;
  border: 1px solid #26231c;
  border-radius: 2px;
}
legend {
  margin: 0 auto;
  padding: 0 4px;
  height: 11px;
  font: 10px/11px "DejaVu Sans", sans-serif;
}
.osc {
  grid-template-columns: 55px 49px 39px 62px;
  width: 207px;
  height: 95px;
}
.dial {
  display: grid;
  grid-template: 14px 36px 11px / 41px;
  justify-items: center;
  align-self: start;
}
.dial span {
  white-space: nowrap;
  justify-self: center;
}
.dial svg, .dial input {
  grid-area: 2 / 1;
  width: 33px;
  height: 34px;
}
.dial input {
  appearance: none;
  background: linear-gradient(#f4732a, #f4732a) 15px 5px / 3px 8px no-repeat, linear-gradient(#a34c1c, #a34c1c) 14px 4px / 5px 10px no-repeat;
  transform: rotate(var(--turn));
}
.dial input::-webkit-slider-thumb {
  appearance: none;
}
output {
  display: block;
}
.panel output {
  grid-row: 3;
  width: 41px;
  height: 11px;
  border: 1px solid #1e1e1e;
  border-radius: 2px;
  background: #4c4c4c;
  color: #fff;
  line-height: 9px;
  text-align: center;
}
.dial.low {
  padding-top: 4px;
}
.dial.small {
  grid-template: 14px 32px 11px / 37px;
  padding-top: 4px;
}
.dial.small svg, .dial.small input {
  width: 29px;
  height: 29px;
}
.dial.small input {
  background-position: 13px 4px, 12px 3px;
}
.dial.small output {
  width: 37px;
}
.switch {
  display: flex;
  flex-direction: column;
  align-self: start;
  width: 40px;
  padding-top: 4px;
}
.switch > span {
  height: 13px;
  align-self: center;
  white-space: nowrap;
}
.switch label {
  display: flex;
  align-items: center;
  justify-content: space-between;
  height: 15px;
}
.switch input, .stack input {
  appearance: none;
  width: 13px;
  height: 13px;
  border: 1px solid #2c2c2c;
  border-radius: 50%;
  background: linear-gradient(#7c7c7c, #606060);
}
.switch input:checked, .stack input:checked {
  border-color: #6b2d12;
  background: radial-gradient(#ffa66e, #f5803c);
}
.modulators {
  width: 523px;
  margin-left: 4px;
}
.middle {
  margin-bottom: 5px;
}
.envelopes {
  justify-content: space-between;
  margin-bottom: 1px;
}
.env {
  grid-template-columns: 55px 49px 63px 41px;
  width: 219px;
  height: 79px;
}
.env2 {
  display: grid;
  grid-template-columns: 49px 47px 57px 31px 71px;
  justify-items: center;
  padding-top: 15px;
}
.lfos {
  gap: 1px;
  padding-left: 4px;
}
.lfo {
  grid-template-columns: 55px 55px 75px 61px;
  width: 259px;
  height: 83px;
}
.lfo .switch, .filter .switch {
  width: 31px;
}
.filters {
  display: flex;
  flex-direction: column;
  gap: 1px;
  width: 167px;
  margin-left: 5px;
  padding-top: 4px;
}
.filter {
  grid-template-columns: 55px 57px 37px;
  height: 79px;
}
.filter .switch {
  padding-top: 0;
}
.faders {
  display: flex;
  gap: 3px;
  margin-left: 9px;
  padding-top: 23px;
}
.fader {
  display: flex;
  flex-direction: column;
  align-items: center;
  width: 41px;
}
.fader span {
  height: 13px;
  white-space: nowrap;
}
.fader input {
  appearance: none;
  writing-mode: vertical-lr;
  direction: rtl;
  width: 27px;
  height: 105px;
  margin-bottom: 4px;
  background: linear-gradient(#2c2c2c, #2c2c2c) 8px 0 / 11px 105px no-repeat, repeating-linear-gradient(transparent 0 8px, #4a463c 8px 9px, transparent 9px 22px) 22px 0 / 3px 105px no-repeat;
}
.fader input::-webkit-slider-thumb {
  appearance: none;
  width: 15px;
  height: 17px;
  border: 1px solid #222;
  border-radius: 2px;
  background: linear-gradient(#f4732a, #f4732a) 1px 6px / 11px 3px no-repeat, linear-gradient(#888, #777 28%, #333 30%, #333 70%, #777 72%, #555);
}
.phaser {
  grid-template-columns: 55px 33px 24px 39px 57px 31px 57px 29px 60px 29px 43px;
  justify-content: start;
  width: 455px;
  height: 79px;
  margin: 0 0 9px 4px;
}
.leds {
  display: grid;
  gap: 6px;
  align-content: start;
  padding-top: 17px;
}
.led {
  width: 10px;
  height: 10px;
  border: 1px solid #1d0d0d;
  background: #421b1d;
}
.stack, .stack label {
  display: flex;
  flex-direction: column;
  align-items: center;
  align-self: start;
}
.stack > input {
  margin-top: 2px;
}
.inv {
  width: 31px;
  height: 14px;
  margin: 1px 0 5px;
  border: 1px solid #333;
  border-radius: 2px;
  background: linear-gradient(#868686, #6a6a6a);
}
.stack select {
  width: 37px;
  height: 16px;
  margin-top: 2px;
  padding-left: 8px;
  border: 1px solid #333;
  border-radius: 2px;
  background: linear-gradient(to bottom left, #ddd 50%, transparent 50%) 24px 5px / 4px 4px no-repeat, linear-gradient(to bottom right, #ddd 50%, transparent 50%) 28px 5px / 4px 4px no-repeat, linear-gradient(90deg, #444 21px, #888 21px);
  color: #fff;
}
.reverb {
  grid-template-columns: 55px 33px 63px 25px 55px 41px 47px 33px 63px 33px 8px 39px 57px 23px 57px 23px 81px 23px 48px;
  justify-content: start;
  width: 803px;
  height: 79px;
}
.reverb .leds {
  padding-top: 5px;
}

/* taskbar */
.taskbar {
  position: relative;
  display: flex;
  align-items: stretch;
  height: 40px;
  background: #212121;
  color: #fff;
}
.start {
  width: 48px;
  background: #393939;
}
.search {
  display: flex;
  align-items: center;
  gap: 10px;
  width: 344px;
  padding-left: 12px;
  border: 1px solid #ccc;
  background: #f2f2f2;
}
.search input {
  flex: 1;
  border: none;
  background: none;
  font-size: 15px;
  color: #444;
}
.search input::placeholder {
  color: #444;
}
.apps {
  flex: 1;
  display: flex;
  gap: 9px;
  padding-left: 4px;
}
.apps button {
  width: 40px;
  border-bottom: 2px solid transparent;
}
.apps .open {
  border-color: #76b9ed;
}
.tray {
  display: flex;
  align-items: center;
  gap: 10px;
  padding-right: 25px;
}
.weather {
  display: flex;
  gap: 9px;
  margin-right: 7px;
  font-size: 13px;
}
.lang {
  margin-left: 2px;
}
.clock {
  margin: 0 8px 0 3px;
  line-height: 18px;
  text-align: center;
}
.tooltip {
  position: absolute;
  left: 0;
  top: -20px;
  padding: 0 5px;
  border: 1px solid #777;
  background: #fff;
  color: #555;
  line-height: 18px;
  box-shadow: 2px 2px 3px #0008;
}
```
